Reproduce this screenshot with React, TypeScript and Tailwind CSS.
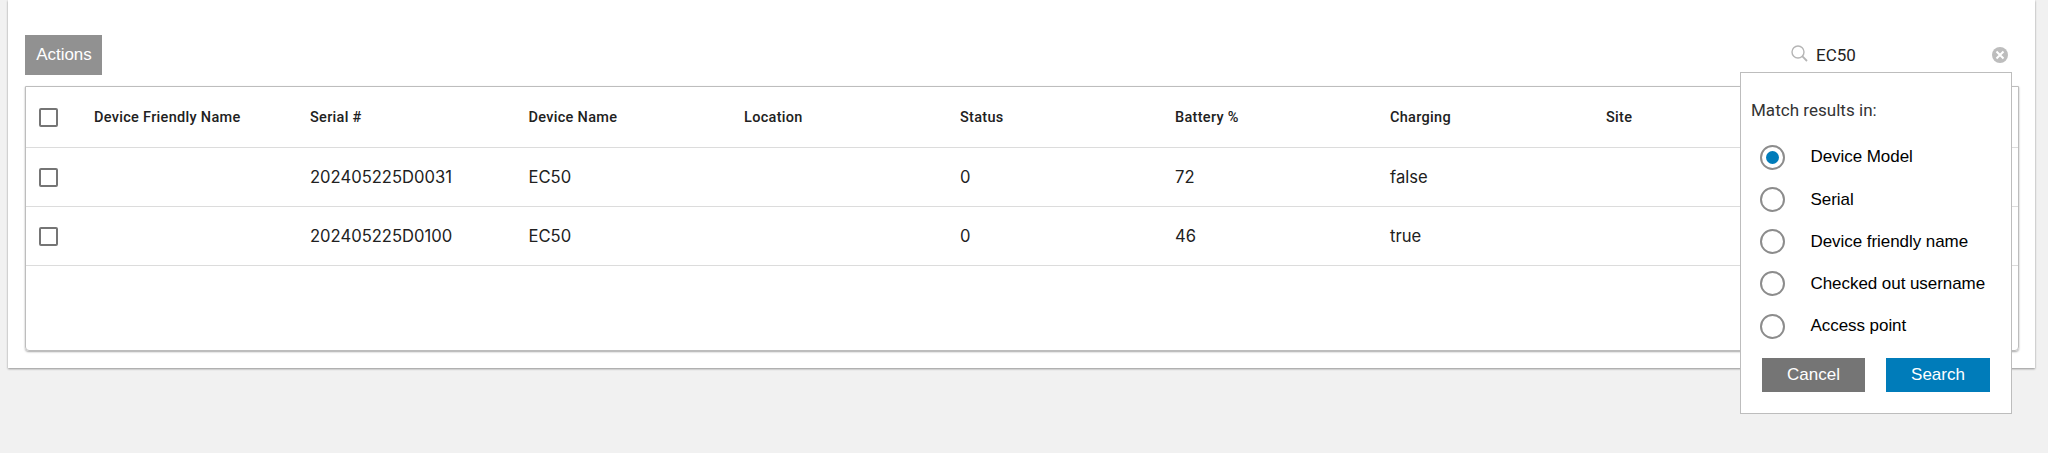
import React from "react";

const columns = [
  { label: "Device Friendly Name", key: "friendly" },
  { label: "Serial #", key: "serial" },
  { label: "Device Name", key: "name" },
  { label: "Location", key: "location" },
  { label: "Status", key: "status" },
  { label: "Battery %", key: "battery" },
  { label: "Charging", key: "charging" },
  { label: "Site", key: "site" },
] as const;

type Row = Partial<Record<(typeof columns)[number]["key"], string>>;

const rows: Row[] = [
  { serial: "202405225D0031", name: "EC50", status: "0", battery: "72", charging: "false" },
  { serial: "202405225D0100", name: "EC50", status: "0", battery: "46", charging: "true" },
];

const options = ["Device Model", "Serial", "Device friendly name", "Checked out username", "Access point"];

const grid = "grid grid-cols-[68px_216px_218.5px_215.5px_216px_215px_215px_216px_1fr] items-center border-b border-[#dcdcdc]";

function Checkbox() {
  return <span className="ml-[13px] block size-[19px] rounded-[2px] border-2 border-[#757575] bg-white" />;
}

function SearchPopup() {
  return (
    <div className="absolute top-[72px] right-[23px] flex h-[342px] w-[272px] flex-col border border-[#bdbdbd] bg-white">
      <p className="mt-[26px] ml-[10px] font-['Roboto'] text-[17px] leading-[22px] tracking-[0.03px] text-[#333]">
        Match results in:
      </p>
      <div className="mt-[15px] flex flex-col">
        {options.map((option, i) => (
          <label key={option} className="flex h-[42.25px] items-center pl-[18.5px]">
            <span className="flex size-[25px] items-center justify-center rounded-full border-2 border-[#8c8c8c]">
              {i === 0 && <span className="size-[13px] rounded-full bg-[#007cba]" />}
            </span>
            <span className="ml-[26px] text-[17px] tracking-[-0.06px] whitespace-nowrap text-black">{option}</span>
          </label>
        ))}
      </div>
      <div className="mt-[11px] ml-[21px] flex gap-[21px]">
        <button className="h-[34px] w-[103px] bg-[#757575] pb-[2px] text-[17px] text-white">Cancel</button>
        <button className="h-[34px] w-[104px] bg-[#007cba] pb-[2px] text-[17px] text-white">Search</button>
      </div>
    </div>
  );
}

export default function App() {
  return (
    <div className="h-[453px] overflow-hidden bg-[#f1f1f1] pl-[8px] font-['Liberation_Sans',sans-serif]">
      <div className="relative flex h-[368px] w-[2027px] flex-col bg-white px-[17px] pt-[35px] shadow-[0_1px_2px_rgba(0,0,0,0.4)]">
        <div className="flex h-[40px] justify-between">
          <button className="w-[77px] bg-[#919191] pl-px text-[17px] tracking-[-0.05px] text-white">Actions</button>
          <div className="mr-[10px] flex w-[217px] items-center">
            <svg className="-mt-[3px] size-[17px] text-[#b5b5b5]" viewBox="0 0 17 17" fill="none" stroke="currentColor">
              <circle cx="7" cy="7" r="6" strokeWidth="1.4" />
              <path d="M11.2 11.2 16 16" strokeWidth="1.8" />
            </svg>
            <span className="ml-[8px] pt-[2px] font-['Roboto'] text-[17px] text-[#222]">EC50</span>
            <svg className="ml-auto size-[16px]" viewBox="0 0 16 16">
              <circle cx="8" cy="8" r="8" fill="#bdbdbd" />
              <path d="m4.5 4.5 7 7m0-7-7 7" stroke="#fff" strokeWidth="2" />
            </svg>
          </div>
        </div>
        <div className="mt-[11px] h-[265px] w-[1994px] rounded-b-[4px] border border-[#bdbdbd] text-[#212121] shadow-[0_1px_2px_rgba(0,0,0,0.35)]">
          <div className={`${grid} h-[61px] font-['Roboto'] text-[14.5px] font-medium tracking-[0.3px]`}>
            <Checkbox />
            {columns.map((c) => (
              <span key={c.key} className="pt-[2px]">
                {c.label}
              </span>
            ))}
          </div>
          {rows.map((row) => (
            <div key={row.serial} className={`${grid} h-[59px] font-['Inter'] text-[16.6px]`}>
              <Checkbox />
              {columns.map((c) => (
                <span key={c.key}>{row[c.key]}</span>
              ))}
            </div>
          ))}
        </div>
        <SearchPopup />
      </div>
    </div>
  );
}
